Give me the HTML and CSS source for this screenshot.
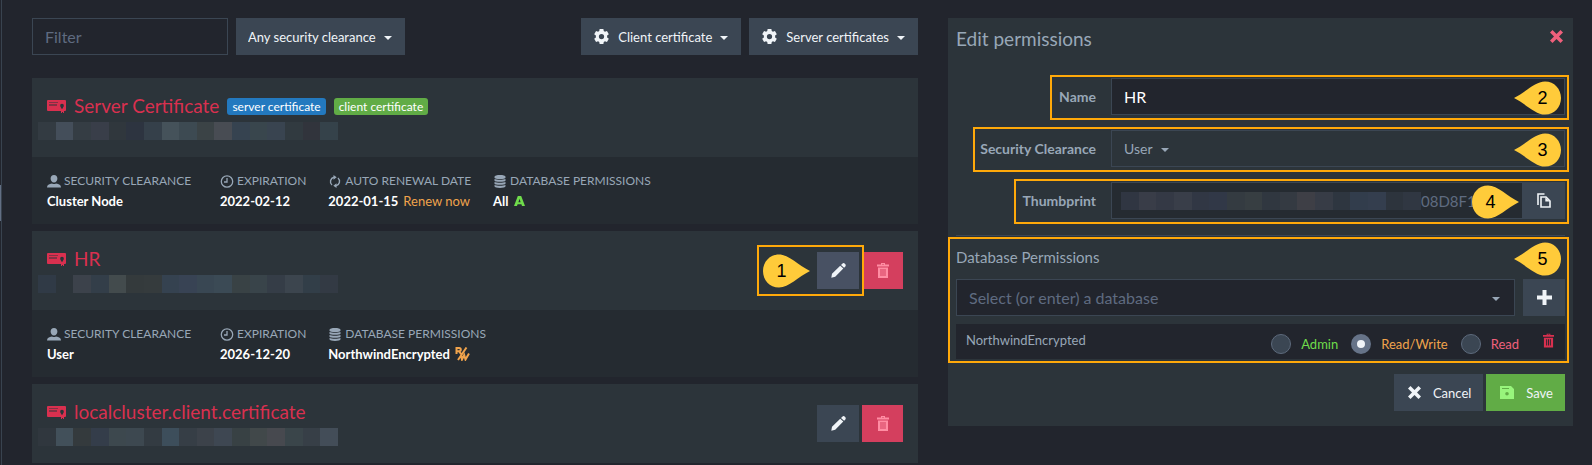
FILE: index.html
```html
<!DOCTYPE html>
<html lang="en">
<head>
    <meta charset="UTF-8">
    <meta name="viewport" content="width=device-width, initial-scale=1.0">
    <title>Certificates</title>
    <link rel="stylesheet" href="styles.css">
</head>
<body>
    <!-- Icon set -->
    <svg class="sprite" aria-hidden="true">
        <symbol id="i-cert" viewBox="0 0 19 13">
            <path fill-rule="evenodd" d="M1 0h17a1 1 0 0 1 1 1v9a1 1 0 0 1-1 1h-1v2h-1v-1h-1v1h-1v-2H1a1 1 0 0 1-1-1V1a1 1 0 0 1 1-1zM2 2v.6h9V2zM2 4.400v1h8v-1zM15 3.800c-1.200 0-1.800.8-1.800 1.800s.3 1.600.8 2v1h2v-1c.5-.4.8-1 .8-2s-.6-1.800-1.800-1.800z"/>
        </symbol>
        <symbol id="i-gear" viewBox="0 0 16 16">
            <path fill-rule="evenodd" d="M6 0h4l.4 2.200 1.300.7 2.100-.8 2 3.400-1.800 1.400v2.200l1.800 1.400-2 3.400-2.100-.8-1.300.7L10 16H6l-.4-2.200-1.300-.7-2.100.8-2-3.400L2 9.100V6.900L.2 5.500l2-3.400 2.100.8 1.300-.7zM8 5.200a2.800 2.800 0 1 0 0 5.600 2.800 2.800 0 1 0 0-5.600z"/>
        </symbol>
        <symbol id="i-user" viewBox="0 0 14 13">
            <path d="M7 0c2.200 0 3.400 1.500 3.400 3.600S9 7.600 7 7.600 3.600 5.700 3.600 3.600 4.800 0 7 0zM0 12.500C0 10 2 9.300 5 8.600q2 1 4 0c3 .7 5 1.400 5 3.900z"/>
        </symbol>
        <symbol id="i-clock" viewBox="0 0 13 13">
            <path fill="none" stroke="currentColor" stroke-width="1.300" d="M6.500.8a5.700 5.700 0 1 0 0 11.400 5.700 5.700 0 1 0 0-11.400zM6.500 3v4H3.500"/>
        </symbol>
        <symbol id="i-renew" viewBox="0 0 13 13">
            <path fill="none" stroke="currentColor" stroke-width="1.400" d="M3.500 10A4.500 4.500 0 0 1 5.500 2.200M9.500 3A4.500 4.500 0 0 1 7.500 10.800"/>
            <path d="M5 0l3.200 2.300L5 4.800zM8 13l-3.200-2.300L8 8.200z"/>
        </symbol>
        <symbol id="i-db" viewBox="0 0 11 13">
            <path d="M5.500 0C8.500 0 11 .7 11 1.700v1C11 3.500 8.500 4 5.500 4S0 3.500 0 2.700v-1C0 .7 2.500 0 5.500 0zM0 4c2 1 9 1 11 0v1.800c0 1.400-11 1.400-11 0zM0 7c2 1 9 1 11 0v1.800c0 1.400-11 1.400-11 0zM0 10c2 1 9 1 11 0v1.300c0 2.200-11 2.200-11 0z"/>
        </symbol>
        <symbol id="i-admin" viewBox="0 0 11 10">
            <path fill-rule="evenodd" d="M3.800 0h3.400L11 10H8l-.6-1.700H3.600L3 10H0zM5.500 2.800L4.400 6.200h2.200z"/>
        </symbol>
        <symbol id="i-rw" viewBox="0 0 15 14">
            <path fill="none" stroke="currentColor" stroke-width="2" d="M1.500 7V1h2.700a1.500 1.500 0 0 1 0 3.200H2M4 4.200L6 7M11.500.5l-8.500 12.500M6 7.500l1 5 2.200-4.500 1.300 4.500L14 6.500"/>
        </symbol>
        <symbol id="i-pencil" viewBox="0 0 15 15">
            <path d="M11.300.7q1.200-1.200 2.600 0t.5 2.800l-1.300 1.300-3.100-2.800zM9.200 2.800l3.100 2.800-8.100 8.200-3.900 1 .7-4z"/>
        </symbol>
        <symbol id="i-trash" viewBox="0 0 12 15">
            <path fill-rule="evenodd" d="M4 0h4v1.500h4v2H0v-2h4zM5 1v.5h2V1zM1 4.500h10V15H1zM3.500 6v7h1V6zM5.500 6v7h1V6zM7.500 6v7h1V6z"/>
        </symbol>
        <symbol id="i-close" viewBox="0 0 13 13">
            <path d="M2.500 0L6.500 4l4-4L13 2.500l-4 4 4 4-2.500 2.500-4-4-4 4L0 10.500l4-4-4-4z"/>
        </symbol>
        <symbol id="i-copy" viewBox="0 0 14 15">
            <path fill="none" stroke="currentColor" stroke-width="1.600" d="M1 12V1h6.500M4 4h5l4 4v6H4z"/>
            <path d="M8.300 4.500v4H13z"/>
        </symbol>
        <symbol id="i-plus" viewBox="0 0 15 15">
            <path d="M5.500 0h4v5.500H15v4H9.500V15h-4V9.500H0v-4h5.500z"/>
        </symbol>
        <symbol id="i-save" viewBox="0 0 14 13">
            <path fill-rule="evenodd" d="M0 0h11l3 3v10H0zM2 2v1h7V2zM7 6a1.800 1.800 0 1 0 0 3.600A1.800 1.800 0 1 0 7 6z"/>
        </symbol>
        <symbol id="i-drop-right" viewBox="0 0 47 34">
            <path d="M16 .5C26 .5 35 11 47 17 35 23 26 33.500 16 33.500 6.500 33.500 0 26 0 17S6.500.5 16 .5z"/>
        </symbol>
        <symbol id="i-drop-left" viewBox="0 0 47 34">
            <path d="M31 .5C21 .5 12 11 0 17c12 6 21 16.500 31 16.500 9.500 0 16-7.500 16-16.500S40.500.5 31 .5z"/>
        </symbol>
    </svg>

    <div class="page">
        <div class="scroll-edge"><div class="scroll-thumb"></div></div>

        <main class="certificates">
            <div class="toolbar">
                <input type="text" class="filter" placeholder="Filter" aria-label="Filter">
                <div class="dropdown">
                    <select aria-label="Security clearance filter">
                        <option>Any security clearance</option>
                    </select>
                    <span class="caret"></span>
                </div>
                <div class="toolbar-right">
                    <button type="button" class="btn"><svg class="gear"><use href="#i-gear"/></svg>Client certificate<span class="caret"></span></button>
                    <button type="button" class="btn"><svg class="gear"><use href="#i-gear"/></svg>Server certificates<span class="caret"></span></button>
                </div>
            </div>

            <section class="card">
                <div class="card-header">
                    <div class="card-name">
                        <h2><svg class="cert"><use href="#i-cert"/></svg>Server Certificate
                            <span class="badge blue">server certificate</span>
                            <span class="badge green">client certificate</span>
                        </h2>
                        <div class="redacted">
                            <i style="background:#333b42"></i><i style="background:#444e5a"></i><i style="background:#353d44"></i><i style="background:#393e49"></i><i style="background:#30373d"></i><i style="background:#2d3440"></i><i style="background:#35404a"></i><i style="background:#45525a"></i><i style="background:#3d4a52"></i><i style="background:#3b4346"></i><i style="background:#484c53"></i><i style="background:#364350"></i><i style="background:#39464d"></i><i style="background:#394450"></i><i style="background:#313a40"></i><i style="background:#31343c"></i><i style="background:#35424a"></i>
                        </div>
                    </div>
                </div>
                <div class="card-body">
                    <div class="info wide">
                        <div class="info-label"><svg><use href="#i-user"/></svg>Security Clearance</div>
                        <div class="info-value">Cluster Node</div>
                    </div>
                    <div class="info">
                        <div class="info-label"><svg><use href="#i-clock"/></svg>Expiration</div>
                        <div class="info-value">2022-02-12</div>
                    </div>
                    <div class="info">
                        <div class="info-label"><svg><use href="#i-renew"/></svg>Auto Renewal Date</div>
                        <div class="info-value">2022-01-15 <a href="#" class="renew">Renew now</a></div>
                    </div>
                    <div class="info">
                        <div class="info-label"><svg><use href="#i-db"/></svg>Database Permissions</div>
                        <div class="info-value">All <svg class="admin"><use href="#i-admin"/></svg></div>
                    </div>
                </div>
            </section>

            <section class="card">
                <div class="card-header">
                    <div class="card-name">
                        <h2><svg class="cert"><use href="#i-cert"/></svg>HR</h2>
                        <div class="redacted">
                            <i style="background:#303a46"></i><i style="background:#2c343a"></i><i style="background:#3c424b"></i><i style="background:#333e49"></i><i style="background:#434b4d"></i><i style="background:#343a3c"></i><i style="background:#353b3d"></i><i style="background:#354250"></i><i style="background:#384354"></i><i style="background:#394753"></i><i style="background:#3b4a55"></i><i style="background:#394245"></i><i style="background:#39444a"></i><i style="background:#353d47"></i><i style="background:#3c454e"></i><i style="background:#323e48"></i><i style="background:#333a44"></i>
                        </div>
                    </div>
                    <div class="card-actions">
                        <button type="button" class="btn icon-btn active" aria-label="Edit"><svg class="pencil"><use href="#i-pencil"/></svg></button>
                        <button type="button" class="btn icon-btn danger" aria-label="Delete"><svg class="trash"><use href="#i-trash"/></svg></button>
                        <div class="highlight hl-edit"><span class="marker right"><svg><use href="#i-drop-right"/></svg><b>1</b></span></div>
                    </div>
                </div>
                <div class="card-body">
                    <div class="info wide">
                        <div class="info-label"><svg><use href="#i-user"/></svg>Security Clearance</div>
                        <div class="info-value">User</div>
                    </div>
                    <div class="info">
                        <div class="info-label"><svg><use href="#i-clock"/></svg>Expiration</div>
                        <div class="info-value">2026-12-20</div>
                    </div>
                    <div class="info">
                        <div class="info-label"><svg><use href="#i-db"/></svg>Database Permissions</div>
                        <div class="info-value">NorthwindEncrypted <svg class="rw"><use href="#i-rw"/></svg></div>
                    </div>
                </div>
            </section>

            <section class="card">
                <div class="card-header">
                    <div class="card-name">
                        <h2><svg class="cert"><use href="#i-cert"/></svg>localcluster.client.certificate</h2>
                        <div class="redacted">
                            <i style="background:#30373e"></i><i style="background:#42505a"></i><i style="background:#343a3d"></i><i style="background:#343d4a"></i><i style="background:#3d484e"></i><i style="background:#3d4850"></i><i style="background:#333b42"></i><i style="background:#3d4e5b"></i><i style="background:#363e46"></i><i style="background:#3c424a"></i><i style="background:#3e4752"></i><i style="background:#384144"></i><i style="background:#41484a"></i><i style="background:#47494f"></i><i style="background:#3a454a"></i><i style="background:#373f47"></i><i style="background:#434d58"></i>
                        </div>
                    </div>
                    <div class="card-actions">
                        <button type="button" class="btn icon-btn" aria-label="Edit"><svg class="pencil"><use href="#i-pencil"/></svg></button>
                        <button type="button" class="btn icon-btn danger" aria-label="Delete"><svg class="trash"><use href="#i-trash"/></svg></button>
                    </div>
                </div>
            </section>
        </main>

        <aside class="panel">
            <div class="panel-title">
                <h3>Edit permissions</h3>
                <button type="button" class="close" aria-label="Close"><svg><use href="#i-close"/></svg></button>
            </div>

            <div class="form-row">
                <label for="name">Name</label>
                <input type="text" id="name" class="field name-field" value="HR">
                <div class="highlight hl-name"><span class="marker left"><svg><use href="#i-drop-left"/></svg><b>2</b></span></div>
            </div>
            <div class="form-row">
                <label for="clearance">Security Clearance</label>
                <div class="field clearance">
                    <select id="clearance">
                        <option>User</option>
                    </select>
                    <span class="caret"></span>
                </div>
                <div class="highlight hl-clearance"><span class="marker left"><svg><use href="#i-drop-left"/></svg><b>3</b></span></div>
            </div>
            <div class="form-row">
                <label for="thumbprint">Thumbprint</label>
                <div class="field thumbprint">
                    <div class="redacted">
                        <i style="background:#303642"></i><i style="background:#393d48"></i><i style="background:#343945"></i><i style="background:#393e49"></i><i style="background:#313744"></i><i style="background:#313847"></i><i style="background:#343b41"></i><i style="background:#373e42"></i><i style="background:#303740"></i><i style="background:#343a42"></i><i style="background:#3e3f46"></i><i style="background:#373c46"></i><i style="background:#2e3640"></i><i style="background:#323d4c"></i><i style="background:#343e4e"></i><i style="background:#2d343d"></i><i style="background:#303742"></i>
                    </div>
                    <input type="text" id="thumbprint" value="08D8F1" readonly>
                </div>
                <button type="button" class="btn icon-btn" aria-label="Copy thumbprint"><svg class="copy"><use href="#i-copy"/></svg></button>
                <div class="highlight hl-thumbprint"><span class="marker right"><svg><use href="#i-drop-right"/></svg><b>4</b></span></div>
            </div>

            <div class="databases">
                <h4>Database Permissions</h4>
                <div class="db-select">
                    <div class="db-input">
                        <input type="text" placeholder="Select (or enter) a database" aria-label="Database">
                        <span class="caret"></span>
                    </div>
                    <button type="button" class="btn icon-btn" aria-label="Add database"><svg class="plus"><use href="#i-plus"/></svg></button>
                </div>
                <div class="db-row">
                    <span class="db-name">NorthwindEncrypted</span>
                    <label class="access admin-access"><input type="radio" name="access">Admin</label>
                    <label class="access rw-access"><input type="radio" name="access" checked>Read/Write</label>
                    <label class="access read-access"><input type="radio" name="access">Read</label>
                    <button type="button" class="remove" aria-label="Remove"><svg><use href="#i-trash"/></svg></button>
                </div>
                <div class="highlight hl-databases"><span class="marker left"><svg><use href="#i-drop-left"/></svg><b>5</b></span></div>
            </div>

            <div class="panel-footer">
                <button type="button" class="btn"><svg class="cancel"><use href="#i-close"/></svg>Cancel</button>
                <button type="button" class="btn save"><svg class="disk"><use href="#i-save"/></svg>Save</button>
            </div>
        </aside>
    </div>
</body>
</html>
```

FILE: styles.css
```css
* {
    box-sizing: border-box;
}

body {
    margin: 0;
    background-color: #22252d;
    color: #98a7b7;
    font-family: Lato, "Liberation Sans", sans-serif;
    font-size: 13px;
    line-height: 20px;
}

svg {
    display: block;
    flex: none;
    fill: currentColor;
}

.sprite {
    position: absolute;
    width: 0;
    height: 0;
}

h2, h3, h4 {
    margin: 0;
    font-weight: 400;
}

input, select, button {
    font: inherit;
    color: inherit;
    border: none;
    border-radius: 0;
    margin: 0;
    padding: 0;
    background: none;
    outline: none;
}

select {
    appearance: none;
    field-sizing: content;
}

button {
    cursor: pointer;
}

input::placeholder {
    color: #5f6b80;
    opacity: 1;
}

.page {
    display: grid;
    grid-template-columns: 2px minmax(0, 886fr) minmax(0, 625fr);
    column-gap: 30px;
    padding-right: 19px;
    height: 100vh;
    overflow: hidden;
}

.scroll-edge {
    border-right: 1px solid #39434f;
    padding-top: 185px;
}

.scroll-thumb {
    height: 36px;
    background-color: #626f84;
}

.caret {
    flex: none;
    width: 8px;
    margin-top: 2px;
    border: 4px solid transparent;
    border-top-color: currentColor;
    border-bottom: none;
}

/* Toolbar */
.toolbar {
    display: flex;
    gap: 8px;
    margin: 18px 0 23px;
}

.filter {
    width: 196px;
    height: 37px;
    padding: 0 12px;
    border: 1px solid #3b4653;
    font-size: 16px;
}

.dropdown, .btn {
    display: flex;
    align-items: center;
    height: 37px;
    padding: 0 13px 0 12px;
    background-color: #3b4653;
    color: #f0f4f8;
}

.dropdown .caret, .btn .caret {
    margin-left: 8px;
}

.toolbar-right {
    display: flex;
    gap: 8px;
    margin-left: auto;
}

.gear {
    width: 15px;
    height: 15px;
    margin: 0 9px 0 1px;
}

/* Cards */
.card {
    margin-bottom: 7px;
}

.card-header {
    display: flex;
    justify-content: space-between;
    height: 79px;
    padding: 15px 15px 0;
    background-color: #2c343a;
}

.card h2 {
    display: flex;
    align-items: center;
    gap: 8px;
    height: 26px;
    color: #d9304f;
    font-size: 19px;
}

.cert {
    width: 19px;
    height: 13px;
}

.badge {
    padding: 0 5px;
    border-radius: 3px;
    color: #fff;
    font-size: 12px;
    line-height: 17px;
}

.blue {
    background-color: #2379bf;
}

.green {
    background-color: #61ac46;
}

.redacted {
    display: grid;
    grid-template-columns: repeat(17, 1fr);
    flex: none;
    width: 300px;
    height: 18px;
}

.card .redacted {
    margin: 3px 0 0 -9px;
}

.card-actions {
    position: relative;
    display: flex;
    gap: 3px;
    margin-top: 6px;
    height: 37px;
}

.icon-btn {
    flex: none;
    justify-content: center;
    width: 42px;
    padding: 0;
}

.active {
    background-color: #485163;
}

.danger {
    width: 41px;
    background-color: #d43f5e;
    color: #ff8da3;
}

.pencil {
    width: 15px;
    height: 15px;
}

.trash {
    width: 12px;
    height: 15px;
}

.card-body {
    display: flex;
    gap: 22px;
    padding: 14px 15px 13px;
    background-color: #252b31;
}

.wide {
    min-width: 151px;
}

.info-label {
    display: flex;
    align-items: center;
    gap: 3px;
    font-size: 12px;
    text-transform: uppercase;
}

.info-label svg {
    width: 14px;
    height: 13px;
}

.info-value {
    display: flex;
    align-items: center;
    gap: 5px;
    color: #fff;
    font-weight: 700;
}

.renew {
    color: #f0a34c;
    font-weight: 400;
    text-decoration: none;
}

.admin {
    width: 11px;
    height: 10px;
    color: #6fdc4b;
}

.rw {
    width: 15px;
    height: 14px;
    color: #f0a34c;
}

/* Edit panel */
.panel {
    align-self: start;
    margin-top: 18px;
    padding: 8px 8px 15px;
    background-color: #2c343a;
}

.panel-title {
    display: flex;
    justify-content: space-between;
    height: 52px;
}

.panel h3 {
    font-size: 19px;
    line-height: 25px;
}

.close {
    align-self: flex-start;
    padding: 4px 2px;
    color: #f0607c;
}

.close svg, .cancel {
    width: 13px;
    height: 13px;
}

.form-row {
    position: relative;
    display: flex;
    margin-bottom: 15px;
}

.form-row label {
    width: 140px;
    margin-right: 15px;
    font-size: 14px;
    font-weight: 700;
    line-height: 37px;
    text-align: right;
}

.field {
    display: flex;
    align-items: center;
    flex: 1;
    min-width: 0;
    height: 37px;
    border: 1px solid #3b4653;
}

.name-field {
    padding: 0 12px;
    background-color: #22252d;
    color: #fff;
    font-size: 16px;
}

.clearance {
    gap: 8px;
    padding-left: 12px;
    font-size: 14px;
}

.thumbprint {
    padding-left: 9px;
    background-color: #252b31;
}

.thumbprint input {
    flex: 1;
    min-width: 0;
    color: #5f6b80;
    font-size: 15px;
}

.copy {
    width: 14px;
    height: 15px;
}

.databases {
    position: relative;
    margin-top: 16px;
    border-top: 1px solid #3b4653;
    padding-top: 12px;
}

.databases h4 {
    margin-bottom: 12px;
    font-size: 15px;
    line-height: 19px;
}

.db-select {
    display: flex;
    gap: 8px;
    margin-bottom: 8px;
}

.db-input {
    display: flex;
    align-items: center;
    flex: 1;
    height: 37px;
    padding: 0 14px 0 12px;
    border: 1px solid #3b4653;
    background-color: #22252d;
}

.db-input input {
    flex: 1;
    font-size: 16px;
}

.plus {
    width: 15px;
    height: 15px;
}

.db-row {
    display: flex;
    height: 35px;
    padding: 0 11px 0 10px;
    background-color: #22252d;
}

.db-name {
    flex: 1;
    line-height: 33px;
}

.access {
    display: flex;
    align-items: center;
    gap: 10px;
    margin: 4px 13px 0 0;
}

.access input {
    appearance: none;
    width: 20px;
    height: 20px;
    border: 1px solid #5d6a7c;
    border-radius: 50%;
    background-color: #3b4653;
}

.access input:checked {
    border: 6px solid #667388;
    background-color: #f0f4f8;
}

.admin-access {
    color: #6fdc4b;
}

.rw-access {
    color: #f0a34c;
}

.read-access {
    margin-right: 24px;
    color: #f0607c;
}

.remove {
    align-self: flex-start;
    padding-top: 9px;
    color: #d9304f;
}

.remove svg {
    width: 11px;
    height: 15px;
}

.panel-footer {
    display: flex;
    justify-content: flex-end;
    gap: 3px;
    margin-top: 15px;
}

.panel-footer .btn {
    gap: 12px;
    padding: 0 12px 0 14px;
}

.save {
    background-color: #61ac46;
}

.disk {
    width: 14px;
    height: 13px;
    color: #98f57c;
}

/* Numbered callouts */
.highlight {
    position: absolute;
    top: -3px;
    right: -4px;
    bottom: -5px;
    border: 2px solid #ffa90a;
    pointer-events: none;
}

.hl-edit {
    top: -7px;
    right: 39px;
    bottom: -7px;
    width: 107px;
}

.hl-name {
    left: 94px;
}

.hl-clearance {
    left: 17px;
}

.hl-thumbprint {
    left: 58px;
}

.hl-databases {
    top: 1px;
    bottom: -4px;
    left: -8px;
}

.marker {
    position: absolute;
    top: 4px;
    right: 6px;
    width: 47px;
    height: 34px;
    color: #ffcb3a;
}

.hl-edit .marker {
    top: 7px;
    right: auto;
    left: 4px;
}

.hl-thumbprint .marker {
    right: 48px;
}

.hl-databases .marker {
    top: 3px;
}

.marker svg {
    width: 47px;
    height: 34px;
}

.marker b {
    position: absolute;
    top: 0;
    left: 0;
    width: 37px;
    color: #000;
    font: 18px/34px "Liberation Sans", sans-serif;
    text-align: center;
}

.left b {
    right: 0;
    left: auto;
}
```
